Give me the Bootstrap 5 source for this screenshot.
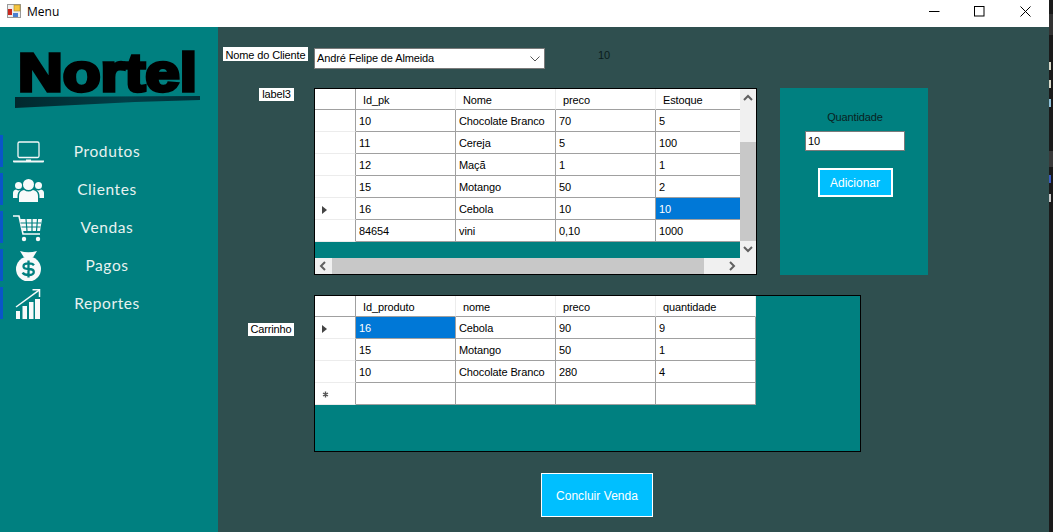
<!DOCTYPE html>
<html lang="pt">
<head>
<meta charset="utf-8">
<title>Menu</title>
<link rel="stylesheet" href="https://cdn.jsdelivr.net/npm/bootstrap@5.3.0/dist/css/bootstrap.min.css">
<style>
html,body{width:1053px;height:532px;overflow:hidden;margin:0;background:#1e1e1e}
body{font-family:"Liberation Sans",Arial,sans-serif;font-size:11px;line-height:1;color:#000;letter-spacing:-.12px}
.win{width:1049px;height:532px}
.tbar{height:27px;background:#fff;font-family:"Open Sans",sans-serif;font-size:12px;letter-spacing:0}
.tbar-ico{margin:4px 6px 0 7px}
.tbar-txt{margin-top:5px;line-height:14px}
.wbtns{margin-left:auto}
.wbtn-a{margin:6px 0 0 0}
.wbtn-b{margin:6px 0 0 34px}
.wbtn-c{margin:6px 18px 0 35px}
.side{width:218px;background:#008080}
.logo{margin:0 0 0 15px;height:108px}
.sidenav{gap:6px}
.sideitem{height:32px;border-left:3px solid #0a55c8;color:#e8f2f0;font-family:"Lato",sans-serif;font-size:15.5px;letter-spacing:.6px}
.sideico{width:31px;margin:2px 0 0 10px;flex:none}
.sidelbl{width:124px;margin-left:1px;text-align:center;padding-top:2px}
.mainarea{width:831px;background:#2f4f4f;padding-top:20px}
.lbl{background:#fff;height:14px;line-height:14px;text-align:center;flex:none}
.lbl-a{width:85px;margin-left:5px;padding-top:1px}
.combo{width:231px;height:21px;margin:1px 0 0 6px;background:#fff;border:1px solid #7a7a7a;padding:0 4px 0 2px}
.combo-txt{line-height:19px}
.num{margin:1px 0 0 53px;color:#0b1c1c;line-height:14px}
.rowb{margin-top:19px}
.lbl-b{width:35px;height:13px;line-height:13px;margin-left:41px}
.grid-a{width:443px;height:187px;margin-left:20px;border:1px solid #000;background:#008080;flex:none}
.grid-top{height:169px}
.grid-clip{width:425px;overflow:hidden;flex:none}
.dgv.table{table-layout:fixed;width:441px;margin:0;border-collapse:separate;border-spacing:0;font-size:11px;line-height:1}
.dgv.table>:not(caption)>*>*{padding:2px 0 0 3px;height:22px;border:0;border-right:1px solid #a0a0a0;border-bottom:1px solid #a0a0a0;background:#fff;color:#000;box-shadow:none;vertical-align:middle;white-space:nowrap;overflow:hidden}
.dgv.table>thead>tr>th{height:21px;font-weight:400;padding-left:7px;border-right:1px solid #ececec}
.dgv.table>thead>tr>th.rh,.dgv.table>tbody>tr>td.rh{border-right:1px solid #a0a0a0;padding:2px 0 0 0}
.dgv.table>tbody>tr>td.rh{border-bottom:1px solid #ececec}
.dgv.table>tbody>tr>td.sel{background:#0078d7;color:#fff}
.rh-ico{display:block;margin-left:7px}
.vbar{width:16px;background:#f0f0f0;flex:none}
.hbar{height:16px;background:#f0f0f0}
.arr-v{height:17px;flex:none}
.arr-h{width:17px;flex:none}
.vtrack{height:36px}
.vthumb{height:99px;background:#c8c8c8}
.hthumb{width:372px;background:#c8c8c8}
.hcorner{width:16px;flex:none}
.qpanel{width:148px;height:187px;margin-left:23px;background:#008080;flex:none;padding:22px 0 0 2px}
.qlbl{color:#0a1f1f;line-height:14px}
.qinput{width:100px;height:20px;margin-top:7px;background:#fff;border:1px solid #7a7a7a;padding:0 0 0 2px;line-height:18px}
.qbtn{width:75px;height:29px;margin-top:17px;background:#00bfff;border:2px solid #fff;border-radius:0;color:#fff;font-size:12px;padding:0;line-height:1;letter-spacing:0}
.rowc{margin-top:20px}
.lbl-c{width:46px;height:13px;line-height:13px;margin:28px 0 0 30px}
.grid-b{width:547px;height:157px;margin-left:20px;border:1px solid #000;background:#008080;flex:none}
.rowd{margin:21px 0 0 323px}
.endbtn{width:112px;height:44px;background:#00bfff;border:1px solid #fff;border-radius:0;color:#fff;font-size:12px;padding:2px 0 0;line-height:1;letter-spacing:.05px}
.strip{width:4px;height:532px;flex:none;background:#1a1a1a}
.sm-a{height:21px;margin-top:14px;background:#333}
.sm-b{width:2px;height:8px;margin-top:27px;background:#d8d8c8}
.sm-c{width:2px;height:8px;margin-top:10px;background:#d8d8c8}
.sm-d{width:2px;height:8px;margin-top:11px;background:#8fc0d8}
.sm-e{height:16px;margin-top:44px;background:#3a3a3a}
.sm-f{width:2px;height:8px;margin-top:8px;background:#3c5cc0}
.sm-g{width:2px;height:8px;margin-top:11px;background:#c8c8c8}
</style>
</head>
<body class="d-flex">
<div class="win d-flex flex-column">
  <div class="tbar d-flex">
    <svg class="tbar-ico" width="14" height="14" viewBox="0 0 14 14"><rect x=".5" y=".5" width="13" height="13" fill="#eee" stroke="#9a9a9a"/><rect x="7" y="1" width="6" height="6" fill="#f5c542" stroke="#b08a20" stroke-width=".6"/><rect x="1" y="5" width="4" height="6" fill="#c8281e"/><rect x="6" y="9" width="5" height="4" fill="#4a7fd0"/></svg>
    <span class="tbar-txt">Menu</span>
    <div class="wbtns d-flex">
      <svg class="wbtn-a" width="11" height="11" viewBox="0 0 11 11"><path d="M0 5.5H10.5" stroke="#000"/></svg>
      <svg class="wbtn-b" width="11" height="11" viewBox="0 0 11 11"><rect x=".5" y=".5" width="9.5" height="9.5" fill="none" stroke="#000"/></svg>
      <svg class="wbtn-c" width="11" height="11" viewBox="0 0 11 11"><path d="M.5.5L10.5 10.5M10.5.5L.5 10.5" stroke="#000"/></svg>
    </div>
  </div>
  <div class="d-flex flex-grow-1">
    <aside class="side">
      <svg class="logo d-block" width="188" height="108" viewBox="0 0 188 108">
        <defs><linearGradient id="lg" x1="0" x2="1" y1="0" y2="0"><stop offset="0" stop-color="#01282e"/><stop offset=".6" stop-color="#014048"/><stop offset="1" stop-color="#013038"/></linearGradient></defs>
        <text x="3" y="64" font-family="Liberation Sans" font-weight="700" font-size="53" textLength="179" lengthAdjust="spacingAndGlyphs" fill="#000" stroke="#000" stroke-width="3.5" letter-spacing="0">Nortel</text>
        <polygon points="0,70 185,69 185,73 120,75 60,78 0,81" fill="url(#lg)"/>
      </svg>
      <nav class="sidenav d-flex flex-column">
        <div class="sideitem d-flex align-items-center">
          <svg class="sideico" width="31" height="24" viewBox="0 0 31 24"><rect x="5" y="2" width="21" height="15.5" rx="1.5" fill="none" stroke="#f4f8f8" stroke-width="1.3"/><path d="M0 20.5H13V19.5H18V20.5H31V21.5Q31 22.5 30 22.5H1Q0 22.5 0 21.5Z" fill="#f4f8f8"/></svg>
          <span class="sidelbl">Produtos</span>
        </div>
        <div class="sideitem d-flex align-items-center">
          <svg class="sideico" width="31" height="24" viewBox="0 0 31 24" fill="#f8fafa"><circle cx="15.5" cy="6.5" r="5.5"/><path d="M6 24V18Q6 13 11 12Q15.5 15 20 12Q25 13 25 18V24Z"/><circle cx="5.5" cy="7.5" r="3.5"/><path d="M0 20V15Q0 12 3 11.5Q5.5 13 7.5 12Q4.5 14 4.5 18V20Z"/><circle cx="25.5" cy="7.5" r="3.5"/><path d="M31 20V15Q31 12 28 11.5Q25.5 13 23.5 12Q26.5 14 26.5 18V20Z"/></svg>
          <span class="sidelbl">Clientes</span>
        </div>
        <div class="sideitem d-flex align-items-center">
          <svg class="sideico" width="31" height="27" viewBox="0 0 31 27"><path d="M0 1H6L10 19H27" fill="none" stroke="#f8fafa" stroke-width="1.6"/><path d="M7 4H29L27 16H9.5Z" fill="#f8fafa"/><path d="M7.5 8H28M8.5 12H27.5M13 4L14 16M19 4V16M24.5 4L23.5 16" stroke="#008080" stroke-width="1.2"/><circle cx="11" cy="24" r="2.2" fill="#f8fafa"/><circle cx="25" cy="24" r="2.2" fill="#f8fafa"/></svg>
          <span class="sidelbl">Vendas</span>
        </div>
        <div class="sideitem d-flex align-items-center">
          <svg class="sideico" width="31" height="30" viewBox="0 0 31 30"><path d="M7 0Q15 2.5 24 0L20 6.5H11Z" fill="#f8fafa"/><rect x="11" y="7" width="9" height="2" fill="#f8fafa"/><circle cx="15.5" cy="18" r="12.5" fill="#f8fafa"/><path d="M21 14.2Q19.5 12.3 15.5 12.3Q10.5 12.3 10.5 15.3Q10.5 18 15.5 18Q20.8 18 20.8 21Q20.8 24 15.5 24Q11 24 9.6 21.6M15.5 9.5V26.5" fill="none" stroke="#008080" stroke-width="2.3"/></svg>
          <span class="sidelbl">Pagos</span>
        </div>
        <div class="sideitem d-flex align-items-center">
          <svg class="sideico" width="31" height="30" viewBox="0 0 31 30" fill="#f8fafa"><rect x="3" y="22" width="4" height="8"/><rect x="9.5" y="17" width="4.5" height="13"/><rect x="16" y="13" width="4.5" height="17"/><rect x="22" y="10" width="5" height="20"/><path d="M3 18L26.5 .8" stroke="#f8fafa" stroke-width="1.5" fill="none"/><path d="M19.5 .8H26.5V8" fill="none" stroke="#f8fafa" stroke-width="1.5"/></svg>
          <span class="sidelbl">Reportes</span>
        </div>
      </nav>
    </aside>
    <main class="mainarea">
      <div class="d-flex align-items-start">
        <div class="lbl lbl-a">Nome do Cliente</div>
        <div class="combo d-flex justify-content-between align-items-center">
          <span class="combo-txt">André Felipe de Almeida</span>
          <svg width="10" height="6" viewBox="0 0 10 6"><path d="M.5.5L5 5L9.5.5" fill="none" stroke="#555"/></svg>
        </div>
        <div class="num">10</div>
      </div>
      <div class="rowb d-flex align-items-start">
        <div class="lbl lbl-b">label3</div>
        <div class="grid-a d-flex flex-column">
          <div class="grid-top d-flex">
            <div class="grid-clip">
              <table class="dgv table">
                <colgroup><col style="width:41px"><col style="width:100px"><col style="width:100px"><col style="width:100px"><col style="width:100px"></colgroup>
                <thead><tr><th class="rh"></th><th>Id_pk</th><th>Nome</th><th>preco</th><th>Estoque</th></tr></thead>
                <tbody>
                  <tr><td class="rh"></td><td>10</td><td>Chocolate Branco</td><td>70</td><td>5</td></tr>
                  <tr><td class="rh"></td><td>11</td><td>Cereja</td><td>5</td><td>100</td></tr>
                  <tr><td class="rh"></td><td>12</td><td>Maçã</td><td>1</td><td>1</td></tr>
                  <tr><td class="rh"></td><td>15</td><td>Motango</td><td>50</td><td>2</td></tr>
                  <tr><td class="rh"><svg class="rh-ico" width="5" height="8" viewBox="0 0 5 8"><path d="M0 0L5 4L0 8Z" fill="#444"/></svg></td><td>16</td><td>Cebola</td><td>10</td><td class="sel">10</td></tr>
                  <tr><td class="rh"></td><td>84654</td><td>vini</td><td>0,10</td><td>1000</td></tr>
                </tbody>
              </table>
            </div>
            <div class="vbar d-flex flex-column">
              <svg class="arr-v" width="16" height="17" viewBox="0 0 16 17"><path d="M4 11L8 7L12 11" fill="none" stroke="#606060" stroke-width="2"/></svg>
              <div class="vtrack"></div>
              <div class="vthumb"></div>
              <svg class="arr-v" width="16" height="17" viewBox="0 0 16 17"><path d="M4 6L8 10L12 6" fill="none" stroke="#606060" stroke-width="2"/></svg>
            </div>
          </div>
          <div class="hbar d-flex">
            <svg class="arr-h" width="17" height="16" viewBox="0 0 17 16"><path d="M10 4L6 8L10 12" fill="none" stroke="#606060" stroke-width="2"/></svg>
            <div class="hthumb"></div>
            <svg class="arr-h ms-auto" width="17" height="16" viewBox="0 0 17 16"><path d="M7 4L11 8L7 12" fill="none" stroke="#606060" stroke-width="2"/></svg>
            <div class="hcorner"></div>
          </div>
        </div>
        <div class="qpanel d-flex flex-column align-items-center">
          <div class="qlbl">Quantidade</div>
          <div class="qinput">10</div>
          <button type="button" class="btn qbtn">Adicionar</button>
        </div>
      </div>
      <div class="rowc d-flex align-items-start">
        <div class="lbl lbl-c">Carrinho</div>
        <div class="grid-b">
          <table class="dgv table">
            <colgroup><col style="width:41px"><col style="width:100px"><col style="width:100px"><col style="width:100px"><col style="width:100px"></colgroup>
            <thead><tr><th class="rh"></th><th>Id_produto</th><th>nome</th><th>preco</th><th>quantidade</th></tr></thead>
            <tbody>
              <tr><td class="rh"><svg class="rh-ico" width="5" height="8" viewBox="0 0 5 8"><path d="M0 0L5 4L0 8Z" fill="#444"/></svg></td><td class="sel">16</td><td>Cebola</td><td>90</td><td>9</td></tr>
              <tr><td class="rh"></td><td>15</td><td>Motango</td><td>50</td><td>1</td></tr>
              <tr><td class="rh"></td><td>10</td><td>Chocolate Branco</td><td>280</td><td>4</td></tr>
              <tr><td class="rh"><svg class="rh-ico" width="7" height="7" viewBox="0 0 7 7"><path d="M3.5 .5V6.5M1 2L6 5M6 2L1 5" stroke="#555" stroke-width="1.4"/></svg></td><td></td><td></td><td></td><td></td></tr>
            </tbody>
          </table>
        </div>
      </div>
      <div class="rowd"><button type="button" class="btn endbtn">Concluir Venda</button></div>
    </main>
  </div>
</div>
<div class="strip">
  <div class="sm-a"></div><div class="sm-b"></div><div class="sm-c"></div><div class="sm-d"></div><div class="sm-e"></div><div class="sm-f"></div><div class="sm-g"></div>
</div>
<script src="https://cdn.jsdelivr.net/npm/bootstrap@5.3.0/dist/js/bootstrap.bundle.min.js"></script>
</body>
</html>
